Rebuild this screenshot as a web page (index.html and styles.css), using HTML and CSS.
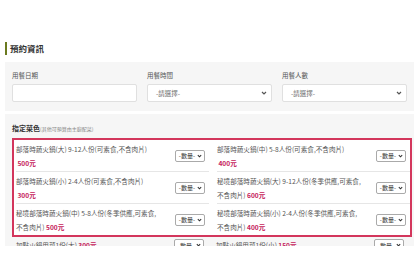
FILE: index.html
```html
<!DOCTYPE html>
<html lang="zh-Hant">
<head>
    <meta charset="UTF-8">
    <title>預約資訊</title>
    <link rel="stylesheet" href="styles.css">
</head>
<body>
    <div class="pagina">
        <h2 class="titulo">預約資訊</h2>
        <div class="panel datos">
            <div class="campo">
                <label>用餐日期</label>
                <div class="caja"></div>
            </div>
            <div class="campo">
                <label>用餐時間</label>
                <div class="caja">-請選擇-<svg class="flecha" width="6" height="4" viewBox="0 0 6 4"><path d="M1 1l2 2 2-2" fill="none" stroke="#555" stroke-width="1.2"/></svg></div>
            </div>
            <div class="campo">
                <label>用餐人數</label>
                <div class="caja">-請選擇-<svg class="flecha" width="6" height="4" viewBox="0 0 6 4"><path d="M1 1l2 2 2-2" fill="none" stroke="#555" stroke-width="1.2"/></svg></div>
            </div>
        </div>
        <div class="panel menu">
            <h3 class="subtitulo">指定菜色<small>(其他可預算由主廚配菜)</small></h3>
            <div class="marcado">
                <div class="plato">
                    <p>部落時蔬火鍋(大) 9-12人份(可素食,不含肉片)<br>&nbsp;<span class="precio">500元</span></p>
                    <div class="cantidad">-數量-<svg width="5" height="4" viewBox="0 0 6 4"><path d="M1 1l2 2 2-2" fill="none" stroke="#333" stroke-width="1.3"/></svg></div>
                </div>
                <div class="plato">
                    <p>部落時蔬火鍋(中) 5-8人份(可素食,不含肉片)<br>&nbsp;<span class="precio">400元</span></p>
                    <div class="cantidad">-數量-<svg width="5" height="4" viewBox="0 0 6 4"><path d="M1 1l2 2 2-2" fill="none" stroke="#333" stroke-width="1.3"/></svg></div>
                </div>
                <div class="plato">
                    <p>部落時蔬火鍋(小) 2-4人份(可素食,不含肉片)<br>&nbsp;<span class="precio">300元</span></p>
                    <div class="cantidad">-數量-<svg width="5" height="4" viewBox="0 0 6 4"><path d="M1 1l2 2 2-2" fill="none" stroke="#333" stroke-width="1.3"/></svg></div>
                </div>
                <div class="plato">
                    <p>秘境部落時蔬火鍋(大) 9-12人份(冬季供應,可素食,<br>不含肉片) <span class="precio">600元</span></p>
                    <div class="cantidad">-數量-<svg width="5" height="4" viewBox="0 0 6 4"><path d="M1 1l2 2 2-2" fill="none" stroke="#333" stroke-width="1.3"/></svg></div>
                </div>
                <div class="plato ultimo">
                    <p>秘境部落時蔬火鍋(中) 5-8人份(冬季供應,可素食,<br>不含肉片) <span class="precio">500元</span></p>
                    <div class="cantidad">-數量-<svg width="5" height="4" viewBox="0 0 6 4"><path d="M1 1l2 2 2-2" fill="none" stroke="#333" stroke-width="1.3"/></svg></div>
                </div>
                <div class="plato ultimo">
                    <p>秘境部落時蔬火鍋(小) 2-4人份(冬季供應,可素食,<br>不含肉片) <span class="precio">400元</span></p>
                    <div class="cantidad">-數量-<svg width="5" height="4" viewBox="0 0 6 4"><path d="M1 1l2 2 2-2" fill="none" stroke="#333" stroke-width="1.3"/></svg></div>
                </div>
            </div>
            <div class="extras">
                <div class="plato">
                    <p>加點火鍋用菜1份(大) <span class="precio">300元</span></p>
                    <div class="cantidad">-數量-<svg width="5" height="4" viewBox="0 0 6 4"><path d="M1 1l2 2 2-2" fill="none" stroke="#333" stroke-width="1.3"/></svg></div>
                </div>
                <div class="plato">
                    <p>加點火鍋用菜1份(小) <span class="precio">150元</span></p>
                    <div class="cantidad">-數量-<svg width="5" height="4" viewBox="0 0 6 4"><path d="M1 1l2 2 2-2" fill="none" stroke="#333" stroke-width="1.3"/></svg></div>
                </div>
            </div>
        </div>
    </div>
</body>
</html>
```
FILE: styles.css
```css
body{
    margin:0;
    background-color:#fff;
    font-family:"Noto Sans CJK TC","Noto Sans",sans-serif;
    color:#555;
}
.pagina{
    width:409px;
    padding-left:5px;
    padding-top:42px;
}
.titulo{
    margin:0 0 7px 0;
    font-size:8.5px;
    line-height:13px;
    font-weight:bold;
    color:#333;
    border-left:2px solid #6b7a1f;
    padding-left:3px;
}
.panel{
    background-color:#f6f6f6;
}
.datos{
    display:grid;
    grid-template-columns:1fr 1fr 1fr;
    gap:10px;
    padding:8px 7px 9px 7px;
}
.campo label{
    display:block;
    font-size:6.5px;
    line-height:10px;
    margin-bottom:4px;
    color:#555;
}
.caja{
    height:16px;
    background-color:#fff;
    border:1px solid #e0e0e0;
    border-radius:2px;
    display:flex;
    align-items:center;
    justify-content:space-between;
    padding:0 4px 0 8px;
    font-size:6.5px;
    color:#666;
}
.menu{
    margin-top:3px;
    padding:8px 2px 0 7px;
    height:124px;
    overflow:hidden;
}
.subtitulo{
    margin:0 0 3px 0;
    font-size:7px;
    line-height:12px;
    font-weight:bold;
    color:#333;
}
.subtitulo small{
    font-size:5px;
    font-weight:normal;
    color:#888;
}
.marcado{
    border:2px solid #d3365c;
    background-color:#fff;
    display:grid;
    grid-template-columns:1fr 1fr;
    column-gap:8px;
    padding:0 0 0 2px;
}
.plato{
    display:flex;
    align-items:center;
    height:31px;
    border-bottom:1px solid #e6e6e6;
    padding-right:4px;
}
.plato.ultimo{
    border-bottom:none;
}
.plato p{
    flex:1;
    margin:0;
    font-size:6.6px;
    line-height:14px;
    color:#555;
}
.precio{
    color:#c5215a;
    font-weight:bold;
}
.cantidad{
    flex:none;
    display:flex;
    align-items:center;
    gap:2px;
    height:10px;
    padding:0 2px 0 3px;
    border:1px solid #aaa;
    border-radius:2px;
    background-color:#fff;
    font-size:6px;
    color:#333;
}
.extras{
    display:grid;
    grid-template-columns:1fr 1fr;
    column-gap:8px;
    padding:1px 4px 0 4px;
}
.extras .plato{
    height:14px;
    border:none;
}
```
